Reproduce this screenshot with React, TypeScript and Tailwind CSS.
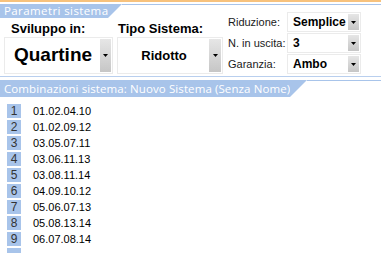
import { ReactNode } from 'react'

const blue = '#a8c4ea'

const combos = [
  '01.02.04.10',
  '01.02.09.12',
  '03.05.07.11',
  '03.06.11.13',
  '03.08.11.14',
  '04.09.10.12',
  '05.06.07.13',
  '05.08.13.14',
  '06.07.08.14',
]

// grey dropdown button with the little black triangle
function Arrow({ className }: { className: string }) {
  return (
    <div className={`flex items-center justify-center bg-gradient-to-b from-[#e6e6e6] via-[#d6d6d6] to-[#c6c6c6] ${className}`}>
      <svg width="5" height="3" viewBox="0 0 5 3">
        <path d="M0 0h5L2.5 3z" fill="#000" />
      </svg>
    </div>
  )
}

function Tab({ label, width, height, spacing }: { label: string; width: string; height: number; spacing: string }) {
  return (
    <div className="flex items-stretch" style={{ height }}>
      <div
        className={`flex shrink-0 items-center whitespace-nowrap bg-[#a8c4ea] pl-[4px] text-[11.5px] leading-none text-white ${width} ${spacing}`}
        style={{ fontFamily: '"Open Sans", "Noto Sans", sans-serif' }}
      >
        {label}
      </div>
      <svg width={height} height={height} viewBox={`0 0 ${height} ${height}`} className="shrink-0">
        <path d={`M0 0H${height}L0 ${height}z`} fill={blue} />
      </svg>
      <div className="flex-1 border-t border-[#a8c4ea]" />
    </div>
  )
}

function SmallSelect({ value }: { value: string }) {
  return (
    <div className="flex h-[20px] w-[74px] border border-[#ebebeb] bg-white p-px">
      <div className="flex flex-1 items-center pl-[4px] text-[12px] font-bold text-black">{value}</div>
      <Arrow className="w-[11px]" />
    </div>
  )
}

function Row({ label, children }: { label: string; children: ReactNode }) {
  return (
    <div className="flex items-center">
      <div className="w-[59px] text-[11px] text-[#1a1a1a]">{label}</div>
      {children}
    </div>
  )
}

export default function App() {
  return (
    <div
      className="h-[253px] w-[381px] overflow-hidden bg-white"
      style={{ fontFamily: '"Liberation Sans", Arial, sans-serif' }}
    >
      <div className="h-[2px] bg-[#f7c27d]" />
      <div className="mt-[2px]">
        <Tab label="Parametri sistema" width="w-[108px]" height={14} spacing="tracking-[0.4px]" />
        <div className="flex h-[59px] border-b border-[#b9cfee]">
          <div className="ml-[4px] flex w-[109px] flex-col pt-[3px]">
            <div className="pl-[7px] text-[13px] font-bold leading-[16px] text-black">Sviluppo in:</div>
            <div className="flex h-[37px] border border-[#ebebeb] p-px">
              <div className="flex flex-1 items-center justify-center text-[19px] font-bold text-black">Quartine</div>
              <Arrow className="w-[11px]" />
            </div>
          </div>
          <div className="ml-[4px] flex w-[106px] flex-col pt-[3px]">
            <div className="pl-px text-[13px] font-bold leading-[16px] text-black">Tipo Sistema:</div>
            <div className="flex h-[37px] border border-[#ebebeb] p-px">
              <div className="flex flex-1 items-center justify-center text-[13px] font-bold text-black">Ridotto</div>
              <Arrow className="w-[12px]" />
            </div>
          </div>
          <div className="ml-[5px] -mt-[6px] flex flex-col gap-px">
            <Row label="Riduzione:">
              <SmallSelect value="Semplice" />
            </Row>
            <Row label="N. in uscita:">
              <SmallSelect value="3" />
            </Row>
            <Row label="Garanzia:">
              <SmallSelect value="Ambo" />
            </Row>
          </div>
        </div>
      </div>
      <div className="mt-[3px]">
        <Tab label="Combinazioni sistema: Nuovo Sistema (Senza Nome)" width="w-[290px]" height={17} spacing="tracking-[0.1px]" />
        <div className="flex flex-col pt-[6px]">
          {combos.map((c, i) => (
            <div key={c} className="flex h-[16px] items-center">
              <div className="ml-[7px] flex h-[14px] w-[14px] items-center justify-center bg-[#a8c4ea] text-[12px] text-[#333]">
                {i + 1}
              </div>
              <div className="ml-[12px] text-[11px] text-black">{c}</div>
            </div>
          ))}
          <div className="flex h-[16px] items-center">
            <div className="ml-[7px] h-[14px] w-[14px] bg-[#a8c4ea]" />
          </div>
        </div>
      </div>
    </div>
  )
}
